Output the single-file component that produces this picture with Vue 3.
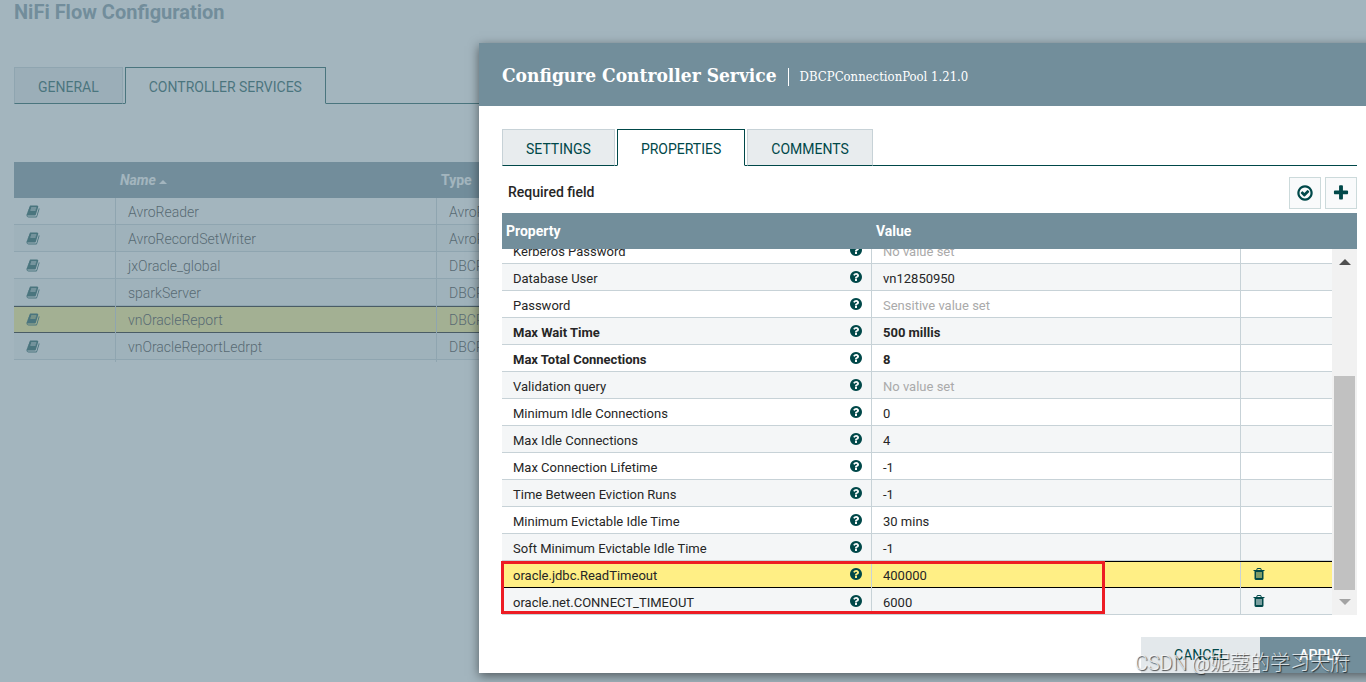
<script setup>
const icons = {
  book: 'M1703 478q40 57 18 129l-275 906q-19 64-76.500 107.500t-122.500 43.500h-923q-77 0-148.500-53.500t-99.500-131.500q-24-67-2-127 0-4 3-27t4-37q1-8-3-21.500t-3-19.500q2-11 8-21t16.500-23.500 16.500-23.500q23-38 45-91.500t30-91.500q3-10 .5-30t-.5-28q3-11 17-28t17-23q21-36 42-92t25-90q1-9-2.500-32t.5-28q4-13 22-30.500t22-22.500q19-26 42.500-84.500t27.500-96.500q1-8-3-25.500t-2-26.500q2-8 9-18t18-23 17-21q8-12 16.500-30.500t15-35 16-36 19.500-32 26.500-23.500 36-11.500 47.500 5.500l-1 3q38-9 51-9h761q74 0 114 56t18 130l-274 906q-36 119-71.500 153.500t-128.500 34.500h-869q-27 0-38 15-11 16-1 43 24 70 144 70h923q29 0 56-15.500t35-41.500l300-987q7-22 5-57 38 15 59 43zm-1064 2q-4 13 2 22.500t20 9.500h608q13 0 25.500-9.500t16.500-22.500l21-64q4-13-2-22.500t-20-9.500h-608q-13 0-25.500 9.500t-16.500 22.500zm-83 256q-4 13 2 22.500t20 9.500h608q13 0 25.500-9.500t16.500-22.500l21-64q4-13-2-22.500t-20-9.500h-608q-13 0-25.500 9.500t-16.500 22.500z',
  help: 'M1024 1376v-192q0-14-9-23t-23-9h-192q-14 0-23 9t-9 23v192q0 14 9 23t23 9h192q14 0 23-9t9-23zm256-672q0-88-55.500-163t-138.500-116-170-41q-243 0-371 213-15 24 8 42l132 100q7 6 19 6 16 0 25-12 53-68 86-92 34-24 86-24 48 0 85.500 26t37.500 59q0 38-20 61t-68 45q-63 28-115.500 86.500t-52.500 125.500v36q0 14 9 23t23 9h192q14 0 23-9t9-23q0-19 21.500-49.500t54.500-49.500q32-18 49-28.500t46-35 44.500-48 28-60.500 12.500-81zm384 192q0 209-103 385.500t-279.500 279.500-385.500 103-385.500-103-279.500-279.500-103-385.500 103-385.500 279.500-279.500 385.500-103 385.500 103 279.500 279.500 103 385.500z',
  trash: 'M704 1376v-704q0-14-9-23t-23-9h-64q-14 0-23 9t-9 23v704q0 14 9 23t23 9h64q14 0 23-9t9-23zm256 0v-704q0-14-9-23t-23-9h-64q-14 0-23 9t-9 23v704q0 14 9 23t23 9h64q14 0 23-9t9-23zm256 0v-704q0-14-9-23t-23-9h-64q-14 0-23 9t-9 23v704q0 14 9 23t23 9h64q14 0 23-9t9-23zm-544-992h448l-48-117q-7-9-17-11h-317q-10 2-17 11zm928 32v64q0 14-9 23t-23 9h-96v948q0 83-47 143.500t-113 60.500h-832q-66 0-113-58.500t-47-141.500v-952h-96q-14 0-23-9t-9-23v-64q0-14 9-23t23-9h309l70-167q15-37 54-63t79-26h320q40 0 79 26t54 63l70 167h309q14 0 23 9t9 23z',
  verify: 'M1299 813l-422 422q-19 19-45 19t-45-19l-294-294q-19-19-19-45t19-45l102-102q19-19 45-19t45 19l147 147 275-275q19-19 45-19t45 19l102 102q19 19 19 45t-19 45zm141 83q0-148-73-273t-198-198-273-73-273 73-198 198-73 273 73 273 198 198 273 73 273-73 198-198 73-273zm224 0q0 209-103 385.500t-279.500 279.500-385.500 103-385.500-103-279.500-279.500-103-385.500 103-385.500 279.500-279.500 385.500-103 385.500 103 279.500 279.500 103 385.500z',
  plus: 'M1600 736v192q0 40-28 68t-68 28h-416v416q0 40-28 68t-68 28h-192q-40 0-68-28t-28-68v-416h-416q-40 0-68-28t-28-68v-192q0-40 28-68t68-28h416v-416q0-40 28-68t68-28h192q40 0 68 28t28 68v416h416q40 0 68 28t28 68z'
}

const services = [
  { name: 'AvroReader', type: 'AvroReader 1.21.0' },
  { name: 'AvroRecordSetWriter', type: 'AvroRecordSetWriter 1.21.0' },
  { name: 'jxOracle_global', type: 'DBCPConnectionPool 1.21.0' },
  { name: 'sparkServer', type: 'DBCPConnectionPool 1.21.0' },
  { name: 'vnOracleReport', type: 'DBCPConnectionPool 1.21.0', selected: true },
  { name: 'vnOracleReportLedrpt', type: 'DBCPConnectionPool 1.21.0' }
]

const properties = [
  { name: 'Kerberos Password', value: 'No value set', unset: true },
  { name: 'Database User', value: 'vn12850950' },
  { name: 'Password', value: 'Sensitive value set', unset: true },
  { name: 'Max Wait Time', value: '500 millis', required: true },
  { name: 'Max Total Connections', value: '8', required: true },
  { name: 'Validation query', value: 'No value set', unset: true },
  { name: 'Minimum Idle Connections', value: '0' },
  { name: 'Max Idle Connections', value: '4' },
  { name: 'Max Connection Lifetime', value: '-1' },
  { name: 'Time Between Eviction Runs', value: '-1' },
  { name: 'Minimum Evictable Idle Time', value: '30 mins' },
  { name: 'Soft Minimum Evictable Idle Time', value: '-1' },
  { name: 'oracle.jdbc.ReadTimeout', value: '400000', selected: true, removable: true },
  { name: 'oracle.net.CONNECT_TIMEOUT', value: '6000', removable: true }
]
</script>

<template>
  <div class="screen">
    <main class="flow">
      <h1>NiFi Flow Configuration</h1>
      <nav class="tabs">
        <button type="button" class="tab">GENERAL</button>
        <button type="button" class="tab active">CONTROLLER SERVICES</button>
      </nav>
      <table class="services">
        <thead>
          <tr>
            <th></th>
            <th class="sorted">Name <i class="caret"></i></th>
            <th>Type</th>
          </tr>
        </thead>
        <tbody>
          <tr v-for="s in services" :key="s.name" :class="{ selected: s.selected }">
            <td><svg class="icon" viewBox="0 0 1792 1792"><path :d="icons.book" /></svg></td>
            <td>{{ s.name }}</td>
            <td>{{ s.type }}</td>
          </tr>
        </tbody>
      </table>
    </main>

    <div class="shade"></div>

    <section class="dialog" role="dialog" aria-labelledby="dialog-title">
      <header class="dialog-head">
        <h2 id="dialog-title">Configure Controller Service</h2>
        <span class="subtitle">DBCPConnectionPool 1.21.0</span>
      </header>

      <div class="dialog-body">
        <nav class="tabs">
          <button type="button" class="tab">SETTINGS</button>
          <button type="button" class="tab active">PROPERTIES</button>
          <button type="button" class="tab">COMMENTS</button>
        </nav>

        <div class="toolbar">
          <span class="required-note">Required field</span>
          <button type="button" class="tool" aria-label="Verify properties">
            <svg viewBox="0 0 1792 1792"><path :d="icons.verify" /></svg>
          </button>
          <button type="button" class="tool" aria-label="Add property">
            <svg viewBox="0 0 1792 1792"><path :d="icons.plus" /></svg>
          </button>
        </div>

        <div class="grid">
          <table class="properties">
            <thead>
              <tr>
                <th>Property</th>
                <th>Value</th>
                <th></th>
              </tr>
            </thead>
            <tbody>
              <tr
                v-for="p in properties"
                :key="p.name"
                :class="{ selected: p.selected, required: p.required }"
              >
                <td class="name">
                  <span>{{ p.name }}</span>
                  <svg class="icon" viewBox="0 0 1792 1792"><path :d="icons.help" /></svg>
                </td>
                <td :class="{ unset: p.unset }">{{ p.value }}</td>
                <td class="actions">
                  <button v-if="p.removable" type="button" :aria-label="'Delete ' + p.name">
                    <svg class="icon" viewBox="0 0 1792 1792"><path :d="icons.trash" /></svg>
                  </button>
                </td>
              </tr>
            </tbody>
          </table>
          <div class="scrollbar">
            <i class="arrow up"></i>
            <i class="thumb"></i>
            <i class="arrow down"></i>
          </div>
          <div class="highlight"></div>
        </div>
      </div>

      <footer class="dialog-foot">
        <button type="button" class="cancel">CANCEL</button>
        <button type="button" class="apply">APPLY</button>
      </footer>
    </section>

    <div class="watermark">CSDN @妮蔻的学习天府</div>
  </div>
</template>

<style>
body {
  margin: 0;
  overflow: hidden;
}
</style>

<style scoped>
* {
  box-sizing: border-box;
}

.screen {
  position: relative;
  min-height: 100vh;
  overflow: hidden;
  background: #fff;
  color: #262626;
  font-family: Roboto, sans-serif;
  font-size: 13px;
}

button {
  font-family: inherit;
  cursor: pointer;
}

h1,
h2 {
  margin: 0;
}

.icon {
  display: block;
  width: 14px;
  height: 14px;
  fill: #004849;
}

/* Page behind the dialog */
.flow {
  padding-left: 14px;
}

h1 {
  height: 67px;
  color: #728e9b;
  font-size: 20px;
  font-weight: 700;
  line-height: 24px;
}

.tabs {
  display: flex;
  gap: 2px;
  height: 37px;
  box-shadow: inset 0 -1px #004849;
}

.tab {
  height: 37px;
  padding: 3px 23px 0;
  border: 1px solid #c7d2d7;
  border-bottom-color: #004849;
  border-radius: 0;
  background: #e8ecee;
  color: #004849;
  font-size: 14px;
}

.tab.active {
  border-color: #004849;
  border-bottom-color: #fff;
  background: #fff;
}

table {
  border-collapse: collapse;
}

th {
  color: #fff;
  font-size: 14px;
  font-weight: 700;
  text-align: left;
}

.services {
  display: block;
  margin-top: 58px;
}

.services thead,
.services tbody {
  display: block;
}

.services tr {
  display: grid;
  grid-template-columns: 102px 321px 1fr;
  height: 27px;
  border-bottom: 1px solid #c7d2d7;
}

.services thead tr {
  height: 36px;
  border: 0;
  background: #728e9b;
}

.services th {
  padding: 0 4px;
  line-height: 37px;
}

.sorted {
  font-style: italic;
}

.caret {
  display: inline-block;
  border: 4px solid transparent;
  border-top-width: 0;
  border-bottom-color: #fff;
  vertical-align: 1px;
}

.services td {
  padding: 0 12px;
  border-right: 1px solid #c7d2d7;
  font-size: 14px;
  font-weight: 300;
  line-height: 29px;
  white-space: nowrap;
}

.services td .icon {
  width: 14px;
  height: 15px;
  margin-top: 6px;
}

tbody tr:nth-child(even) {
  background: #f4f6f7;
}

tbody tr.selected {
  border-top: 1px solid #000;
  border-bottom-color: #000;
  background: #ffef85;
}

.services .selected td {
  line-height: 26px;
}

.services .selected td .icon {
  margin-top: 5px;
}

.shade {
  position: absolute;
  inset: 0;
  background: rgba(114, 142, 155, 0.65);
}

/* Dialog */
.dialog {
  position: absolute;
  top: 43px;
  right: -14px;
  left: 479px;
  background: #fff;
  box-shadow: 0 3px 10px rgba(0, 0, 0, 0.5);
}

.dialog-head {
  display: flex;
  align-items: center;
  height: 63px;
  padding: 0 23px;
  background: #728e9b;
  color: #fff;
  font-family: "Roboto Slab", "DejaVu Serif Condensed", "DejaVu Serif", serif;
}

h2 {
  padding-right: 11px;
  font-size: 19px;
  font-weight: 700;
}

.subtitle {
  margin-top: 4px;
  padding-left: 11px;
  border-left: 1px solid #fff;
  font-size: 13px;
  line-height: 18px;
}

.dialog-body {
  padding: 23px 23px 0;
}

.toolbar {
  display: flex;
  gap: 4px;
  align-items: center;
  padding: 11px 0 4px;
}

.required-note {
  flex: 1;
  padding: 0 0 2px 6px;
  font-size: 14px;
  font-weight: 500;
}

.tool {
  display: grid;
  place-items: center;
  width: 32px;
  height: 32px;
  padding: 0;
  border: 1px solid #ccdadb;
  border-radius: 0;
  background: #f9fafb;
}

.tool svg {
  width: 18px;
  fill: #004849;
}

.grid {
  position: relative;
}

.properties,
.properties thead {
  display: block;
}

.properties tr {
  display: grid;
  grid-template-columns: 370px 369px 1fr;
  flex: none;
  height: 27px;
  border-bottom: 1px solid #c7d2d7;
}

.properties thead tr {
  height: 36px;
  border: 0;
  background: #728e9b;
}

.properties th {
  padding: 0 4px;
  line-height: 37px;
}

.properties tbody {
  display: flex;
  flex-direction: column;
  justify-content: flex-end;
  height: 366px;
  margin-right: 25px;
  overflow: hidden;
}

.properties td {
  padding: 0 11px;
  border-right: 1px solid #c7d2d7;
  line-height: 29px;
}

.properties td:last-child {
  border-right: 0;
}

.properties .selected td {
  line-height: 27px;
}

.properties .name {
  display: flex;
  justify-content: space-between;
  padding-right: 8px;
}

.name .icon {
  margin-top: 6px;
}

.selected .name .icon {
  margin-top: 5px;
}

.required td {
  font-weight: 700;
}

.properties .unset {
  color: #aaa;
}

.actions button {
  display: block;
  margin-top: 6px;
  padding: 0;
  border: 0;
  background: none;
}

.selected .actions button {
  margin-top: 5px;
}

.scrollbar {
  position: absolute;
  top: 36px;
  right: 0;
  bottom: 0;
  display: flex;
  flex-direction: column;
  align-items: center;
  justify-content: space-between;
  width: 25px;
  padding: 10px 0;
  background: #f1f1f1;
}

.arrow {
  border: 6px solid transparent;
}

.up {
  border-top-width: 0;
  border-bottom-color: #505050;
}

.down {
  border-bottom-width: 0;
  border-top-color: #a3a3a3;
}

.thumb {
  width: 21px;
  height: 214px;
  margin: auto 0 9px;
  background: #c1c1c1;
}

.highlight {
  position: absolute;
  bottom: 1px;
  left: -1px;
  width: 604px;
  height: 53px;
  border: 3px solid #ed1c24;
}

.dialog-foot {
  display: flex;
  justify-content: flex-end;
  padding-top: 22px;
}

.dialog-foot button {
  width: 120px;
  height: 36px;
  padding: 0;
  border: 0;
  font-size: 14px;
}

.dialog-foot .cancel {
  width: 119px;
  background: #e3e8eb;
  color: #004849;
}

.apply {
  background: #728e9b;
  color: #fff;
  font-weight: 500;
}

.watermark {
  position: absolute;
  right: 16px;
  bottom: 5px;
  color: rgba(255, 255, 255, 0.75);
  font-family: Roboto, "Noto Sans CJK SC", sans-serif;
  font-size: 20px;
  font-weight: 300;
  line-height: 28px;
  text-shadow: 1px 1px 1px rgba(0, 0, 0, 0.7);
  white-space: nowrap;
}
</style>
